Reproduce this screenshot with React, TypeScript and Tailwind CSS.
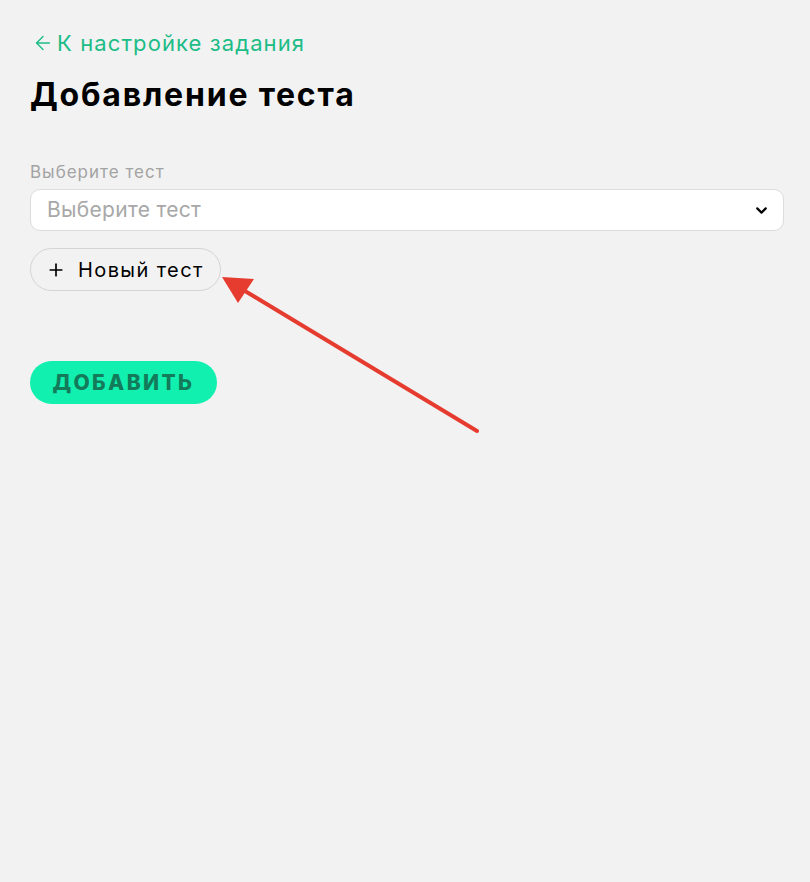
import { ChevronDown, Plus, ArrowLeft } from 'lucide-react';

export default function App() {
  return (
    <div
      className="relative min-h-[882px] bg-[#f2f2f2] pl-[30px] pr-[26px] pt-[30px]"
      style={{ fontFamily: '"Inter", "Noto Sans", sans-serif' }}
    >
      <a href="#" className="flex items-center gap-[3px] text-[22px] leading-[26px] tracking-[1.1px] text-[#1cbc86]">
        <ArrowLeft size={22} strokeWidth={1.5} className="ml-[2px]" />
        <span>К настройке задания</span>
      </a>

      <h1 className="mt-[19px] text-[32px] font-bold leading-[40px] tracking-[1.8px] text-black">
        Добавление теста
      </h1>

      <div className="mt-[47px]">
        <label className="block text-[17px] leading-[20px] tracking-[1px] text-[#a3a3a3]">Выберите тест</label>
        <div className="mt-[7px] flex h-[42px] items-center justify-between rounded-[10px] border border-[#dcdcdc] bg-white pl-[16px] pr-[13px]">
          <span className="text-[21px] tracking-[0.3px] text-[#a8a8a8]">Выберите тест</span>
          <ChevronDown size={17} strokeWidth={3} className="text-black" />
        </div>
      </div>

      <button className="mt-[17px] flex h-[43px] items-center gap-[12px] rounded-full border border-[#d4d4d4] bg-[#f2f2f2] pl-[15px] pr-[16px] text-[20px] tracking-[1.4px] text-black">
        <Plus size={20} strokeWidth={2} />
        <span>Новый тест</span>
      </button>

      <button className="mt-[70px] flex h-[43px] w-[187px] items-center justify-center rounded-full bg-[#12f0b0] text-[21px] font-extrabold tracking-[2.4px] text-[#137a5a]">
        ДОБАВИТЬ
      </button>

      <svg className="pointer-events-none absolute left-0 top-0" width="810" height="882">
        <line x1="477" y1="431" x2="240" y2="288" stroke="#e63c30" strokeWidth="4" strokeLinecap="round" />
        <polygon points="222,277 254,279 238,303" fill="#e63c30" />
      </svg>
    </div>
  );
}
